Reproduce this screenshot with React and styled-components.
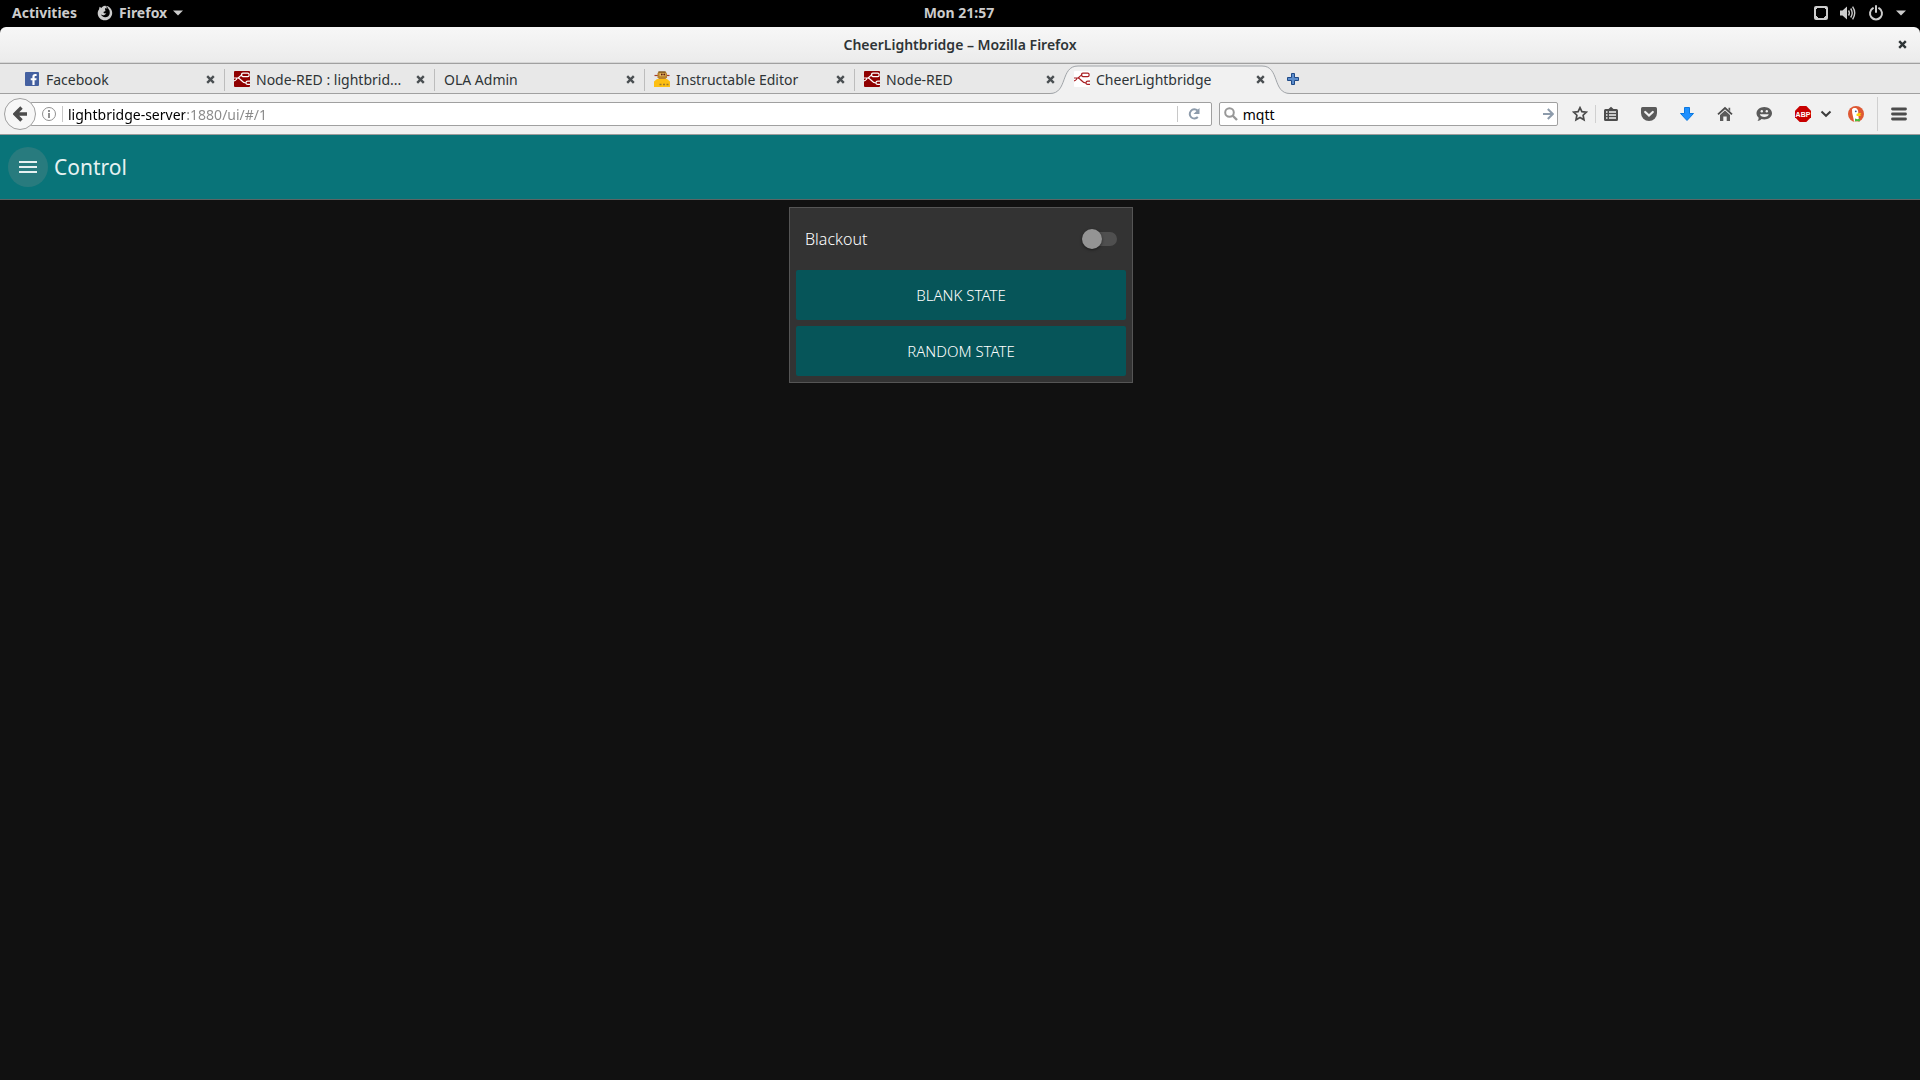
import React, { useState } from "react";
import styled, { createGlobalStyle } from "styled-components";

const GlobalStyle = createGlobalStyle`
  * {
    box-sizing: border-box;
  }
  html, body {
    margin: 0;
    background: #111111;
  }
  body, button, input {
    font-family: "Noto Sans", "Open Sans", sans-serif;
    font-size: 14px;
  }
  button {
    margin: 0;
    padding: 0;
    border: 0;
    background: none;
    color: inherit;
    cursor: pointer;
  }
  svg {
    display: block;
    flex: none;
  }
`;

const Screen = styled.div`
  display: flex;
  flex-direction: column;
  min-height: 100vh;
  background: #111111;
`;

/* desktop panel */

const Panel = styled.header`
  display: grid;
  grid-template-columns: 1fr auto 1fr;
  align-items: center;
  height: 27px;
  padding: 0 14px 2px 12px;
  background: #000;
  color: #ccc;
`;

const PanelGroup = styled.div`
  display: flex;
  align-items: center;
  gap: ${(p) => p.$gap}px;
  justify-content: ${(p) => (p.$end ? "flex-end" : "flex-start")};
`;

const PanelButton = styled.button`
  display: flex;
  align-items: center;
  gap: 6px;
  height: 25px;
  font-size: 14px;
  font-weight: 700;
`;

/* browser window */

const WindowTop = styled.div`
  background: #000;
`;

const TitleBar = styled.div`
  display: grid;
  grid-template-columns: 1fr auto 1fr;
  align-items: center;
  height: 37px;
  padding: 0 13px 1px;
  border-bottom: 1px solid #a0a0a0;
  border-radius: 6px 6px 0 0;
  background: linear-gradient(#f7f7f7, #ebebeb);
  box-shadow: inset 0 -1px 0 #d6d6d6;
`;

const WindowTitle = styled.h1`
  grid-column: 2;
  margin: 0;
  font-size: 14px;
  font-weight: 600;
  color: #2e3436;
`;

const CloseWindow = styled.button`
  justify-self: end;
`;

const TabStrip = styled.nav`
  display: flex;
  height: 30px;
  padding-left: 15px;
  border-bottom: 1px solid #a0a0a0;
  background: #e8e8e8;
`;

const TabItem = styled.div`
  position: relative;
  display: flex;
  align-items: center;
  flex: 0 1 210px;
  min-width: 0;
  height: 30px;
  padding: 0 10px 0 9px;
  color: #2e3436;

  &::after {
    content: "";
    position: absolute;
    right: 0;
    top: 5px;
    width: 1px;
    height: 22px;
    background: ${(p) => (p.$line ? "#bcbcbc" : "transparent")};
  }
`;

const TabShape = styled.svg`
  position: absolute;
  left: -15px;
  top: 0;
  width: calc(100% + 30px);
  height: 30px;
`;

const TabButton = styled.button`
  position: relative;
  display: flex;
  align-items: center;
  gap: 6px;
  flex: 1;
  min-width: 0;
  height: 30px;
  text-align: left;
`;

const TabTitle = styled.span`
  white-space: nowrap;
`;

const TabClose = styled.button`
  position: relative;
  padding: 0 0 0 8px;
`;

const NewTab = styled.button`
  padding: 0 12px;
`;

const NavBar = styled.div`
  display: flex;
  align-items: center;
  height: 41px;
  padding: 0 13px 0 4px;
  border-bottom: 1px solid #9c9c9c;
  background: #f1f1f1;
`;

const BackButton = styled.button`
  position: relative;
  display: flex;
  align-items: center;
  justify-content: center;
  flex: none;
  width: 32px;
  height: 32px;
  border: 1px solid #a0a0a0;
  border-radius: 50%;
  background: #f7f7f7;
`;

const Field = styled.form`
  display: flex;
  align-items: center;
  flex: ${(p) => p.$flex};
  min-width: 0;
  height: 24px;
  margin: 0 0 0 ${(p) => p.$left}px;
  padding: 0 ${(p) => p.$right}px 0 ${(p) => p.$inset}px;
  border: 1px solid #a0a0a0;
  border-radius: 2px;
  background: #fff;
`;

const TextInput = styled.input`
  flex: 1;
  min-width: 0;
  height: 22px;
  margin-left: 5px;
  padding: 0;
  border: 0;
  outline: 0;
  background: transparent;
  color: #000;
`;

/* host name is black, port and path are grey */
const AddressInput = styled(TextInput)`
  background: linear-gradient(to right, #000 117px, #888 117px);
  background-clip: text;
  -webkit-background-clip: text;
  -webkit-text-fill-color: transparent;
`;

const FieldLine = styled.span`
  flex: none;
  width: 1px;
  height: 16px;
  margin: 0 ${(p) => p.$right}px 0 ${(p) => p.$left}px;
  background: #c8c8c8;
`;

const Tools = styled.div`
  display: flex;
  align-items: center;
  flex: none;
  margin-left: 14px;
`;

const ToolButton = styled.button`
  flex: none;
  margin-right: ${(p) => p.$after}px;
`;

const ToolLine = styled.span`
  width: 1px;
  height: ${(p) => p.$height}px;
  margin-right: ${(p) => p.$after}px;
  background: #d0d0d0;
`;

/* dashboard page */

const AppBar = styled.div`
  display: flex;
  align-items: center;
  gap: 6px;
  height: 65px;
  padding: 0 8px;
  border-bottom: 1px solid #5c6464;
  background: #097479;
`;

const MenuButton = styled.button`
  display: flex;
  align-items: center;
  justify-content: center;
  width: 40px;
  height: 40px;
  border-radius: 50%;
  background: #287b7e;
`;

const PageTitle = styled.h2`
  margin: 0;
  padding-bottom: 1px;
  font-size: 21px;
  font-weight: 400;
  color: #e6f1f1;
`;

const Content = styled.main`
  display: flex;
  justify-content: center;
  padding: 7px 0 7px 2px;
`;

const Card = styled.section`
  display: flex;
  flex-direction: column;
  gap: 6px;
  width: 344px;
  padding: 6px;
  border: 1px solid #555;
  background: #333;
`;

const SwitchRow = styled.label`
  display: flex;
  align-items: center;
  justify-content: space-between;
  height: 50px;
  padding: 0 9px;
  font-size: 16px;
  font-weight: 300;
  color: #fff;
  cursor: pointer;
`;

const Switch = styled.input`
  appearance: none;
  display: flex;
  align-items: center;
  width: 34px;
  height: 14px;
  margin: 0;
  border-radius: 7px;
  background: #4f4f4f;
  cursor: pointer;

  &::before {
    content: "";
    flex: none;
    width: 20px;
    height: 20px;
    margin-left: -1px;
    border-radius: 50%;
    background: #949494;
    box-shadow: 0 1px 3px rgba(0, 0, 0, 0.5);
  }
  &:checked {
    justify-content: flex-end;
  }
  &:checked::before {
    background: #097479;
  }
`;

const ActionButton = styled.button`
  height: 50px;
  border-radius: 2px;
  background: #065559;
  color: #fff;
  font-size: 15px;
  font-weight: 300;
  text-transform: uppercase;
`;

/* icons */

const CaretDown = () => (
  <svg width="10" height="6" viewBox="0 0 10 6">
    <path d="M0 0.5h10L5 5.5z" fill="#ccc" />
  </svg>
);

const FirefoxIcon = () => (
  <svg width="16" height="16" viewBox="0 0 16 16">
    <path
      d="M2 4.5 2.6 1.8 4.4 3C5.600 1 8 .8 8 .8c4.200 0 7.200 3.300 7.200 7.200 0 4.100-3.300 7.300-7.300 7.300S.7 12.200.7 8.200C.7 6.800 1.200 5.500 2 4.500z"
      fill="#ccc"
    />
    <path
      d="M8 3.300c2.900-.4 5 1.700 4.800 4.600-.2 2.700-2.300 4.500-4.700 4.400-2-.1-3.600-1.300-4.200-3 1.200 1.300 2.700 1.300 3.900.5L9.400 8.600 7 8.200 6.400 7l2.100-.9-.4-1.400z"
      fill="#000"
    />
    <path d="M9.300 1.500 11 3.600 10.300 4l2 1.600" stroke="#000" fill="none" />
  </svg>
);

const DisplayIcon = () => (
  <svg width="14" height="14" viewBox="0 0 14 14">
    <rect x="1" y="1" width="12" height="12" rx="1" fill="none" stroke="#ccc" strokeWidth="2" />
    <path d="M2 12v-2h1v1h1v1zM12 12v-2h-1v1h-1v1zM2 2h1v1H2zM11 2h1v1h-1z" fill="#ccc" />
  </svg>
);

const VolumeIcon = () => (
  <svg width="16" height="16" viewBox="0 0 16 16">
    <path d="M0 5.500h2.500L7 1.500v13L2.500 10.500H0z" fill="#ccc" />
    <path
      d="M8.500 5.500q1.600 2.500 0 5M10.700 3.500q3 4.500 0 9M12.600 1.700q4.200 6.300 0 12.600"
      fill="none"
      stroke="#ccc"
      strokeWidth="1.400"
    />
  </svg>
);

const PowerIcon = () => (
  <svg width="16" height="16" viewBox="0 0 16 16">
    <path
      d="M5 3.200a6 6 0 1 0 6 0"
      fill="none"
      stroke="#ccc"
      strokeWidth="2"
      strokeLinecap="round"
    />
    <path d="M8 1v6" stroke="#ccc" strokeWidth="2" strokeLinecap="round" />
  </svg>
);

const CrossIcon = ({ color }) => (
  <svg width="9" height="9" viewBox="0 0 9 9">
    <path d="M1.200 1.200l6.600 6.600M7.800 1.200L1.200 7.800" stroke={color} strokeWidth="2.400" />
  </svg>
);

const FacebookIcon = () => (
  <svg width="16" height="16" viewBox="0 0 16 16">
    <rect x="1" y="1" width="14" height="14" rx="1" fill="#4460a0" />
    <path
      d="M8.400 14V9.200H6.700V7.200h1.700V5.700c0-1.800 1-2.700 2.700-2.700h1.500v2h-1c-.8 0-1 .4-1 1v1.200h2l-.3 2h-1.700V14z"
      fill="#fff"
    />
  </svg>
);

const NodeRedIcon = ({ active }) => (
  <svg width="16" height="16" viewBox="0 0 16 16">
    <rect width="16" height="16" rx="1" fill={active ? "#fff" : "#8f0000"} />
    <g fill="none" stroke={active ? "#a81e22" : "#fff"} strokeWidth="1.200">
      <path d="M0 7h3.500c2.500 0 1.800-3 5-3M3.500 7c3.500 0 4 5 8.500 5M0 9.800c2 0 2-.8 3-2.300" />
      <rect x="7.500" y="2.200" width="7.600" height="3.400" rx="1.400" />
      <path d="M16 10.200h-2.200q-1.800 0-1.800 1.600t1.800 1.500H16" />
    </g>
  </svg>
);

const RobotIcon = () => (
  <svg width="16" height="16" viewBox="0 0 16 16">
    <path d="M0.500 4.500h15" stroke="#a33b2c" strokeWidth="1.200" />
    <path d="M4.500 0.500h7l1.500 2v4l-1.500 1.500H5L3.500 6.500v-4z" fill="#b9822c" />
    <path d="M4.500 1h7" stroke="#6d4a20" />
    <path d="M5.500 2.200h6v3h-6z" fill="#e8bd62" />
    <circle cx="7.800" cy="3.500" r="0.900" fill="#5a1a10" />
    <circle cx="10.200" cy="3.500" r="0.900" fill="#5a1a10" />
    <path d="M0 16v-5.500L3 8h10l3 2.500V16z" fill="#fdbf12" />
    <path d="M5.500 13.500h2M9 13.500h2M12.500 13.500h2" stroke="#9c7a2c" strokeWidth="1.700" />
  </svg>
);

const PlusIcon = () => (
  <svg width="12" height="12" viewBox="0 0 12 12">
    <path
      d="M4.500.5h3v4h4v3h-4v4h-3v-4h-4v-3h4z"
      fill="#5b8ccb"
      stroke="#204a87"
      strokeLinejoin="round"
    />
  </svg>
);

const BackIcon = () => (
  <svg width="14" height="16" viewBox="0 0 14 16">
    <path d="M8.500 1.500 2 8l6.500 6.500M2.500 8H14" fill="none" stroke="#4c4c4c" strokeWidth="3.400" />
  </svg>
);

const InfoIcon = () => (
  <svg width="14" height="14" viewBox="0 0 14 14">
    <circle cx="7" cy="7" r="6.500" fill="none" stroke="#909090" />
    <path d="M6 3h2v2H6zM6 6h2v5H6z" fill="#909090" />
  </svg>
);

const ReloadIcon = () => (
  <svg width="12" height="12" viewBox="0 0 12 12">
    <path d="M9.500 2.600A4.600 4.600 0 1 0 9.800 9" fill="none" stroke="#8d9bab" strokeWidth="2" />
    <path d="M11.500 0v6h-6z" fill="#8d9bab" />
  </svg>
);

const SearchIcon = () => (
  <svg width="14" height="14" viewBox="0 0 14 14">
    <circle cx="5.500" cy="5.500" r="4.300" fill="none" stroke="#989898" strokeWidth="2" />
    <path d="M8.500 8.500 13 13" stroke="#989898" strokeWidth="2.400" />
  </svg>
);

const GoIcon = () => (
  <svg width="11" height="12" viewBox="0 0 11 12">
    <path d="M0 6h9.500M4.800 1l5 5-5 5" fill="none" stroke="#8d9bab" strokeWidth="2" />
  </svg>
);

const StarIcon = () => (
  <svg width="16" height="16" viewBox="0 0 16 16">
    <path
      d="M8 1.700l1.900 4 4.400.5-3.200 3 .9 4.600L8 11.500l-4 2.300.9-4.600-3.200-3 4.400-.5z"
      fill="none"
      stroke="#4c4c4c"
      strokeWidth="1.700"
    />
  </svg>
);

const ListIcon = () => (
  <svg width="16" height="16" viewBox="0 0 16 16">
    <path d="M1 4.500Q1 3 2.500 3h3L8 .8 10.500 3h3Q15 3 15 4.500v9q0 1.500-1.500 1.500h-11Q1 15 1 13.500z" fill="#4c4c4c" />
    <path d="M3 6h1.500M6 6h7M3 9h1.500M6 9h7M3 12h1.500M6 12h7" stroke="#f1f1f1" strokeWidth="1.700" />
  </svg>
);

const PocketIcon = () => (
  <svg width="16" height="16" viewBox="0 0 16 16">
    <path d="M1.500 1h13q1.500 0 1.500 1.500V7a8 8 0 0 1-16 0V2.500Q0 1 1.500 1z" fill="#5a5a5a" />
    <path d="M4.200 6 8 9.600 11.800 6" fill="none" stroke="#f1f1f1" strokeWidth="2.200" strokeLinecap="round" />
  </svg>
);

const DownloadIcon = () => (
  <svg width="16" height="16" viewBox="0 0 16 16">
    <path d="M5.500 1.500h5v6h4L8 14.500 1.500 7.500h4z" fill="#1e90ff" stroke="#0a78e0" />
  </svg>
);

const HomeIcon = () => (
  <svg width="16" height="16" viewBox="0 0 16 16">
    <path d="M1 8.300 8 2l7 6.300" fill="none" stroke="#4c4c4c" strokeWidth="1.800" />
    <path d="M3 9l5-4.500L13 9v6H9.700v-4.500H6.300V15H3z" fill="#5a5a5a" />
    <path d="M11.500 1.800h1.700v3.500l-1.700-1.500z" fill="#5a5a5a" />
  </svg>
);

const ChatIcon = () => (
  <svg width="16" height="16" viewBox="0 0 16 16">
    <path d="M8.300 1C12.500 1 16 3.800 16 7.300s-3.500 6.200-7.700 6.200c-1 0-2-.2-2.800-.4-1.400 1.500-3 1.900-4 1.900.8-.9 1.200-2 1.200-3.200C1.400 10.700.5 9.100.5 7.300.5 3.800 4.100 1 8.300 1z" fill="#5a5a5a" />
    <circle cx="5.800" cy="5.300" r="1.200" fill="#f1f1f1" />
    <circle cx="10.800" cy="5.300" r="1.200" fill="#f1f1f1" />
    <path d="M3.800 8.300h9q-1 2.700-4.500 2.700t-4.500-2.700z" fill="#f1f1f1" />
  </svg>
);

const AdblockIcon = () => (
  <svg width="16" height="16" viewBox="0 0 16 16">
    <path d="M4.700 0h6.600L16 4.700v6.600L11.300 16H4.700L0 11.300V4.700z" fill="#c80000" />
    <text
      x="8"
      y="11"
      textAnchor="middle"
      fontFamily="Liberation Sans, sans-serif"
      fontSize="7"
      fontWeight="700"
      fill="#fff"
    >
      ABP
    </text>
  </svg>
);

const ChevronIcon = () => (
  <svg width="12" height="8" viewBox="0 0 12 8">
    <path d="M1.500 1.500 6 5.800l4.500-4.300" fill="none" stroke="#3c3c3c" strokeWidth="2" />
  </svg>
);

const DuckIcon = () => (
  <svg width="16" height="16" viewBox="0 0 16 16">
    <circle cx="8" cy="8" r="8" fill="#de5833" />
    <path d="M4 3.500C5 1.800 8 1.500 9.500 3.500c1.200 1.700.6 3.500.8 5L11 15q-3 1-5 .4C5.500 12 4.600 9 4.200 7z" fill="#fff" />
    <circle cx="7.800" cy="5.300" r="0.900" fill="#2d4f8e" />
    <path d="M8.500 8q2-1.500 5-1l-1.700 1.500 1.700.4Q11 10.700 8.500 9.800z" fill="#fdd20a" />
    <path d="M7 12.500l2.500.8 2.500-.8v3l-2.500-.5-2.500.5z" fill="#4cba3c" />
  </svg>
);

const BrowserMenuIcon = () => (
  <svg width="16" height="14" viewBox="0 0 16 14">
    <path d="M1.500 2h13M1.500 7h13M1.500 12h13" stroke="#4c4c4c" strokeWidth="2.800" strokeLinecap="round" />
  </svg>
);

const MenuIcon = () => (
  <svg width="18" height="12" viewBox="0 0 18 12">
    <path d="M0 1h18M0 6h18M0 11h18" stroke="#e6f1f1" strokeWidth="2" />
  </svg>
);

const ActiveTabShape = () => (
  <TabShape viewBox="0 0 240 30" preserveAspectRatio="none" aria-hidden="true">
    <path
      d="M0 29.500C18 29.500 10 2 28 2H212C230 2 222 29.500 240 29.500V30H0z"
      fill="#f1f1f1"
    />
    <path d="M0 29.500C18 29.500 10 2 28 2H212C230 2 222 29.500 240 29.500" fill="none" stroke="#a0a4a8" />
  </TabShape>
);

const tabs = [
  { title: "Facebook", icon: <FacebookIcon />, line: true },
  { title: "Node-RED : lightbrid...", icon: <NodeRedIcon />, line: true },
  { title: "OLA Admin", line: true },
  { title: "Instructable Editor", icon: <RobotIcon />, line: true },
  { title: "Node-RED", icon: <NodeRedIcon /> },
  { title: "CheerLightbridge", icon: <NodeRedIcon active />, active: true },
];

const tools = [
  { name: "Pocket", icon: <PocketIcon />, after: 22 },
  { name: "Downloads", icon: <DownloadIcon />, after: 22 },
  { name: "Home", icon: <HomeIcon />, after: 23 },
  { name: "Chat", icon: <ChatIcon />, after: 23 },
  { name: "Adblock Plus", icon: <AdblockIcon />, after: 9 },
  { name: "Adblock options", icon: <ChevronIcon />, after: 16 },
  { name: "DuckDuckGo", icon: <DuckIcon />, after: 13 },
];

function App() {
  const [url, setUrl] = useState("lightbridge-server:1880/ui/#/1");
  const [query, setQuery] = useState("mqtt");
  const [blackout, setBlackout] = useState(false);
  const stop = (e) => e.preventDefault();

  return (
    <Screen>
      <GlobalStyle />
      <Panel>
        <PanelGroup $gap={20}>
          <PanelButton>Activities</PanelButton>
          <PanelButton>
            <FirefoxIcon />
            Firefox
            <CaretDown />
          </PanelButton>
        </PanelGroup>
        <PanelButton>Mon 21:57</PanelButton>
        <PanelGroup $gap={12} $end>
          <DisplayIcon />
          <VolumeIcon />
          <PowerIcon />
          <CaretDown />
        </PanelGroup>
      </Panel>

      <WindowTop>
        <TitleBar>
          <WindowTitle>CheerLightbridge – Mozilla Firefox</WindowTitle>
          <CloseWindow aria-label="Close window">
            <CrossIcon color="#2e3436" />
          </CloseWindow>
        </TitleBar>
      </WindowTop>

      <TabStrip>
        {tabs.map((tab, i) => (
          <TabItem key={i} $line={tab.line}>
            {tab.active && <ActiveTabShape />}
            <TabButton>
              {tab.icon}
              <TabTitle>{tab.title}</TabTitle>
            </TabButton>
            <TabClose aria-label={`Close ${tab.title}`}>
              <CrossIcon color="#4a4f52" />
            </TabClose>
          </TabItem>
        ))}
        <NewTab aria-label="New tab">
          <PlusIcon />
        </NewTab>
      </TabStrip>

      <NavBar>
        <BackButton aria-label="Back">
          <BackIcon />
        </BackButton>
        <Field $flex="1157 1 0" $left={-6} $right={11} $inset={11} onSubmit={stop}>
          <InfoIcon />
          <FieldLine $left={6} $right={0} />
          <AddressInput
            aria-label="Address"
            value={url}
            onChange={(e) => setUrl(e.target.value)}
          />
          <FieldLine $left={4} $right={10} />
          <button aria-label="Reload">
            <ReloadIcon />
          </button>
        </Field>
        <Field $flex="330 1 0" $left={7} $right={3} $inset={4} onSubmit={stop}>
          <SearchIcon />
          <TextInput
            aria-label="Search"
            value={query}
            onChange={(e) => setQuery(e.target.value)}
          />
          <button aria-label="Search now">
            <GoIcon />
          </button>
        </Field>
        <Tools>
          <ToolButton $after={7} aria-label="Bookmark this page">
            <StarIcon />
          </ToolButton>
          <ToolLine $height={18} $after={7} />
          <ToolButton $after={22} aria-label="Show bookmarks">
            <ListIcon />
          </ToolButton>
          {tools.map((tool) => (
            <ToolButton key={tool.name} $after={tool.after} aria-label={tool.name}>
              {tool.icon}
            </ToolButton>
          ))}
          <ToolLine $height={34} $after={13} />
          <ToolButton $after={0} aria-label="Open menu">
            <BrowserMenuIcon />
          </ToolButton>
        </Tools>
      </NavBar>

      <AppBar>
        <MenuButton aria-label="Toggle menu">
          <MenuIcon />
        </MenuButton>
        <PageTitle>Control</PageTitle>
      </AppBar>

      <Content>
        <Card>
          <SwitchRow>
            Blackout
            <Switch
              type="checkbox"
              role="switch"
              checked={blackout}
              onChange={(e) => setBlackout(e.target.checked)}
            />
          </SwitchRow>
          <ActionButton>Blank State</ActionButton>
          <ActionButton>Random State</ActionButton>
        </Card>
      </Content>
    </Screen>
  );
}

export default App;
